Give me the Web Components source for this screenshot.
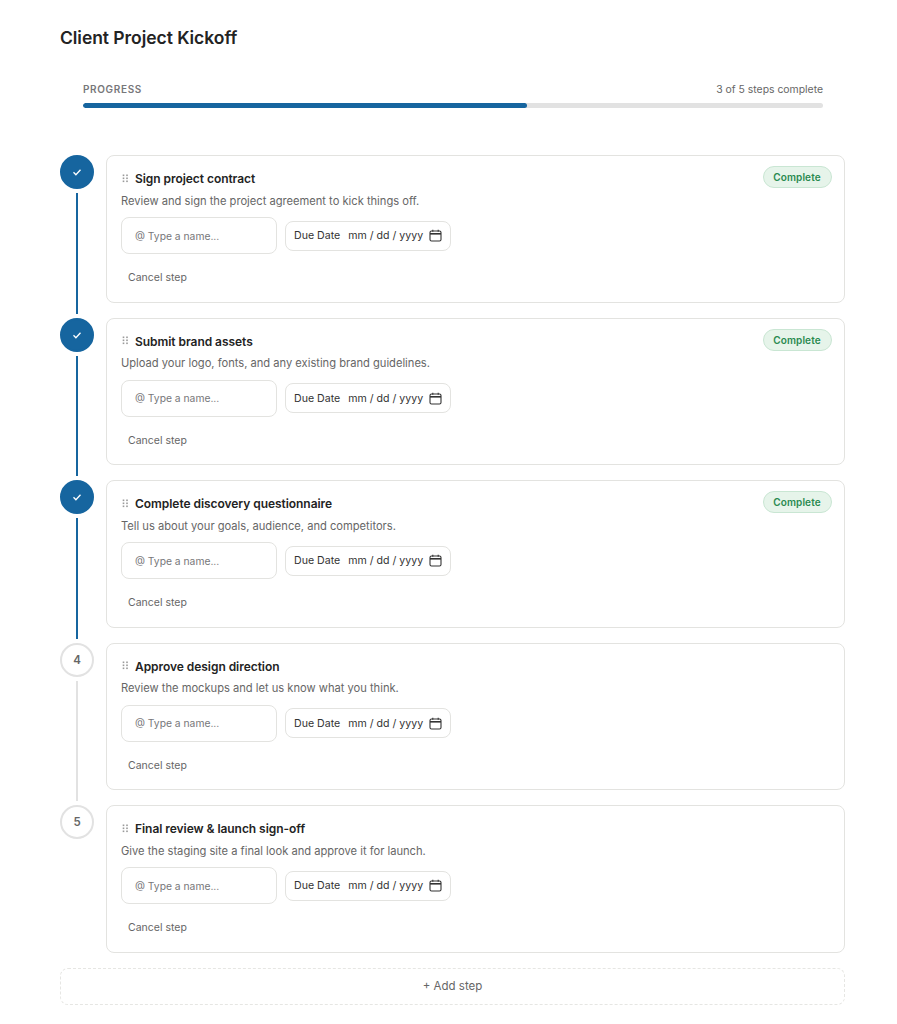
<!DOCTYPE html>
<html>
<head>
<meta charset="utf-8">
<title>Client Project Kickoff</title>
<style>
  body {
    margin: 0;
    background: #fff;
    font-family: 'Inter', 'Liberation Sans', sans-serif;
    color: #1f1f1f;
  }
</style>
</head>
<body>
<kickoff-page>
  <progress-bar slot="progress" value="60" label="3 of 5 steps complete"></progress-bar>
  <kickoff-step number="1" state="done" heading="Sign project contract" text="Review and sign the project agreement to kick things off."></kickoff-step>
  <kickoff-step number="2" state="done" heading="Submit brand assets" text="Upload your logo, fonts, and any existing brand guidelines."></kickoff-step>
  <kickoff-step number="3" state="done" heading="Complete discovery questionnaire" text="Tell us about your goals, audience, and competitors."></kickoff-step>
  <kickoff-step number="4" heading="Approve design direction" text="Review the mockups and let us know what you think."></kickoff-step>
  <kickoff-step number="5" last heading="Final review &amp; launch sign-off" text="Give the staging site a final look and approve it for launch."></kickoff-step>
</kickoff-page>

<script>
const pageTemplate = document.createElement('template');
pageTemplate.innerHTML = `
  <style>
    :host {
      display: block;
      padding: 27px 52px 0 60px;
    }
    h1 {
      margin: 0 0 34px;
      font-size: 17.5px;
      line-height: 21px;
      font-weight: 600;
      letter-spacing: -0.05px;
      color: #232323;
    }
    .steps {
      display: flex;
      flex-direction: column;
      margin-top: 47px;
    }
    button {
      display: block;
      width: 100%;
      height: 37.5px;
      margin-top: 15px;
      padding: 0;
      background: none;
      border: 1px dashed #e6e6e3;
      border-radius: 8px;
      font: inherit;
      font-size: 11.5px;
      color: #666;
      cursor: pointer;
    }
  </style>
  <h1>Client Project Kickoff</h1>
  <slot name="progress"></slot>
  <div class="steps"><slot></slot></div>
  <button>+ Add step</button>
`;

class KickoffPage extends HTMLElement {
  constructor() {
    super();
    const shadow = this.attachShadow({ mode: 'open' });
    shadow.appendChild(pageTemplate.content.cloneNode(true));
  }
}

const progressTemplate = document.createElement('template');
progressTemplate.innerHTML = `
  <style>
    :host {
      display: block;
      margin: 0 22px 0 23px;
    }
    .labels {
      display: flex;
      justify-content: space-between;
      align-items: center;
      height: 14px;
      margin-bottom: 6.5px;
      font-size: 10.4px;
      color: #666;
    }
    .title {
      font-size: 10px;
      font-weight: 600;
      letter-spacing: 0.65px;
      color: #77777a;
    }
    .track {
      height: 5.5px;
      border-radius: 3px;
      background: #e2e2e2;
      overflow: hidden;
    }
    .fill {
      height: 100%;
      border-radius: 3px;
      background: #16659f;
    }
  </style>
  <div class="labels">
    <span class="title">PROGRESS</span>
    <span class="count"></span>
  </div>
  <div class="track"><div class="fill"></div></div>
`;

class ProgressBar extends HTMLElement {
  constructor() {
    super();
    const shadow = this.attachShadow({ mode: 'open' });
    shadow.appendChild(progressTemplate.content.cloneNode(true));
  }

  connectedCallback() {
    this.shadowRoot.querySelector('.count').textContent = this.getAttribute('label');
    this.shadowRoot.querySelector('.fill').style.width = this.getAttribute('value') + '%';
  }
}

const stepTemplate = document.createElement('template');
stepTemplate.innerHTML = `
  <style>
    :host {
      display: flex;
      gap: 12px;
      padding-bottom: 15px;
    }
    :host([last]) {
      padding-bottom: 0;
    }
    .rail {
      flex: none;
      width: 34px;
      display: flex;
      flex-direction: column;
      align-items: center;
      margin-bottom: -15px;
    }
    :host([last]) .rail {
      margin-bottom: 0;
    }
    .circle {
      flex: none;
      box-sizing: border-box;
      width: 34px;
      height: 34px;
      border-radius: 50%;
      border: 2px solid #e2e2e2;
      display: flex;
      align-items: center;
      justify-content: center;
      font-size: 11.5px;
      font-weight: 600;
      color: #666;
    }
    .line {
      flex: 1;
      width: 2px;
      margin: 4px 0;
      background: #e2e2e2;
    }
    :host([last]) .line {
      display: none;
    }
    :host([state="done"]) .circle {
      background: #16659f;
      border-color: #16659f;
    }
    :host([state="done"]) .line {
      background: #16659f;
    }
    .card {
      position: relative;
      flex: 1;
      min-width: 0;
      box-sizing: border-box;
      height: 147.5px;
      padding: 13.5px 14px 0;
      background: #fff;
      border: 1px solid #e3e3e0;
      border-radius: 8px;
    }
    .head {
      display: flex;
      align-items: center;
      gap: 6px;
      height: 18px;
    }
    .grip {
      flex: none;
    }
    h2 {
      margin: 0;
      font-size: 12px;
      font-weight: 600;
      letter-spacing: -0.05px;
      color: #232323;
    }
    p {
      margin: 5px 0 7.5px;
      font-size: 11.15px;
      line-height: 17px;
      color: #666;
    }
    .fields {
      display: flex;
      align-items: center;
      gap: 8px;
    }
    .name {
      box-sizing: border-box;
      width: 156px;
      height: 37px;
      padding-left: 13px;
      display: flex;
      align-items: center;
      border: 1px solid #e3e3e0;
      border-radius: 8px;
      font-size: 10.3px;
      color: #77777a;
    }
    .date {
      box-sizing: border-box;
      width: 166px;
      height: 30px;
      padding: 0 9px 0 8px;
      display: flex;
      align-items: center;
      gap: 8px;
      border: 1px solid #e3e3e0;
      border-radius: 8px;
      font-size: 10.6px;
      white-space: nowrap;
      color: #333;
    }
    .date span {
      flex: none;
    }
    .date svg {
      flex: none;
      margin-left: -2px;
    }
    .cancel {
      display: block;
      margin: 17px 0 0 7px;
      font-size: 10.5px;
      line-height: 14px;
      color: #666;
    }
    .badge {
      position: absolute;
      top: 10px;
      right: 12.5px;
      display: none;
      box-sizing: border-box;
      width: 69px;
      height: 22px;
      align-items: center;
      justify-content: center;
      border: 1px solid #c9e6d3;
      border-radius: 12px;
      background: #e6f4ea;
      font-size: 10px;
      font-weight: 600;
      letter-spacing: 0.1px;
      color: #2a8a50;
    }
    :host([state="done"]) .badge {
      display: flex;
    }
  </style>
  <div class="rail">
    <div class="circle"></div>
    <div class="line"></div>
  </div>
  <div class="card">
    <span class="badge">Complete</span>
    <div class="head">
      <svg class="grip" width="8" height="10" viewBox="0 0 8 10" fill="#9a9a9a">
        <rect x="1.7" y="0.5" width="1.6" height="1.6"/><rect x="5.2" y="0.5" width="1.6" height="1.6"/>
        <rect x="1.7" y="3.5" width="1.6" height="1.6"/><rect x="5.2" y="3.5" width="1.6" height="1.6"/>
        <rect x="1.7" y="6.5" width="1.6" height="1.6"/><rect x="5.2" y="6.5" width="1.6" height="1.6"/>
      </svg>
      <h2></h2>
    </div>
    <p></p>
    <div class="fields">
      <div class="name">@ Type a name...</div>
      <div class="date">
        <span>Due Date</span>
        <span>mm / dd / yyyy</span>
        <svg width="13" height="13" viewBox="0 0 13 13" fill="none" stroke="#333" stroke-width="1.1">
          <rect x="1" y="2" width="11" height="10" rx="1.5"/>
          <path d="M1 4.8h11" stroke-width="1.6"/>
          <path d="M3.8 .8v2M9.2 .8v2"/>
        </svg>
      </div>
    </div>
    <span class="cancel">Cancel step</span>
  </div>
`;

const checkIcon = `<svg width="12" height="12" viewBox="0 0 12 12" fill="none" stroke="#fff" stroke-width="1.3"><path d="M2.5 6.3l2.4 2.4 4.6-5"/></svg>`;

class KickoffStep extends HTMLElement {
  constructor() {
    super();
    const shadow = this.attachShadow({ mode: 'open' });
    shadow.appendChild(stepTemplate.content.cloneNode(true));
  }

  connectedCallback() {
    const root = this.shadowRoot;
    root.querySelector('h2').textContent = this.getAttribute('heading');
    root.querySelector('p').textContent = this.getAttribute('text');
    const circle = root.querySelector('.circle');
    if (this.getAttribute('state') === 'done') {
      circle.innerHTML = checkIcon;
    } else {
      circle.textContent = this.getAttribute('number');
    }
  }
}

customElements.define('kickoff-page', KickoffPage);
customElements.define('progress-bar', ProgressBar);
customElements.define('kickoff-step', KickoffStep);
</script>
</body>
</html>
